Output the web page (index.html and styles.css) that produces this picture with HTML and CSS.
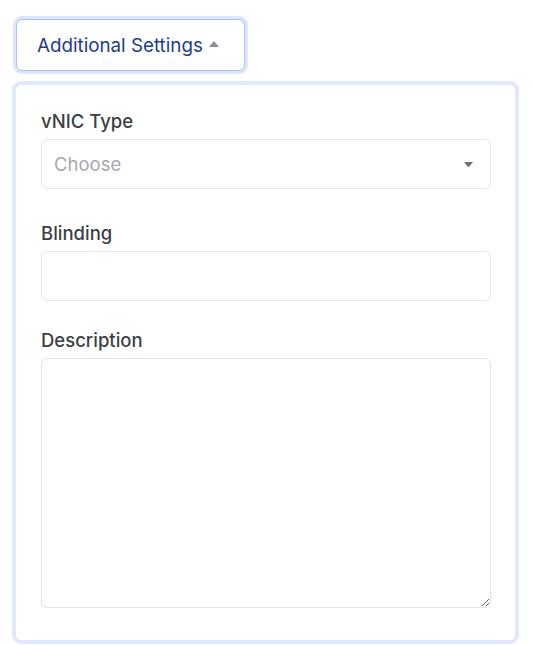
FILE: index.html
```html
<!DOCTYPE html>
<html>
<head>
<meta charset="utf-8">
<link rel="stylesheet" href="styles.css">
</head>
<body>
<div class="page">
  <button class="toggle" type="button">Additional Settings <span class="caret-up"></span></button>
  <div class="panel">
    <div class="group group-select">
      <label class="label">vNIC Type</label>
      <div class="select">
        <span class="placeholder">Choose</span>
        <svg class="caret-down" width="11" height="7" viewBox="0 0 11 7"><path d="M1 1 H10 L6.1 5.7 Q5.5 6.4 4.9 5.7 Z" fill="#6f737b"/></svg>
      </div>
    </div>
    <div class="group group-mid">
      <label class="label">Blinding</label>
      <input class="input" type="text">
    </div>
    <div class="group">
      <label class="label">Description</label>
      <textarea class="textarea"></textarea>
    </div>
  </div>
</div>
</body>
</html>
```
FILE: styles.css
```css
* { box-sizing: border-box; }
html, body { margin: 0; padding: 0; background: #fff; }
body { font-family: Inter, "Noto Sans", sans-serif; }
.page { display: flex; flex-direction: column; align-items: flex-start; padding-top: 19px; }
.toggle {
  margin-left: 16px;
  height: 52px;
  width: 229px;
  padding: 0 0 0 20px;
  display: flex;
  align-items: center;
  gap: 6px;
  font-family: Inter, sans-serif;
  font-size: 18.8px;
  color: #1e3c8c;
  background: #fff;
  border: 1px solid #a9c2f4;
  border-radius: 6px;
  box-shadow: 0 0 0 3px #dce6fc;
}
.caret-up {
  width: 0; height: 0;
  border-left: 5px solid transparent;
  border-right: 5px solid transparent;
  border-bottom: 6px solid #8a8e96;
  margin-top: -3px;
}
.panel {
  margin: 10px 0 0 12px;
  width: 507px;
  border: 4px solid #dfe8fc;
  border-radius: 9px;
  padding: 28px 24px 32px 25px;
}
.group { display: flex; flex-direction: column; }
.group-select { margin-bottom: 36px; }
.group-mid { margin-bottom: 31px; }
.label {
  font-size: 18.5px;
  line-height: 16px;
  font-weight: 500;
  color: #3b3f46;
  margin-bottom: 10px;
}
.select, .input, .textarea {
  width: 450px;
  border: 1px solid #e4e4e6;
  border-radius: 6px;
  background: #fff;
}
.select {
  height: 50px;
  display: flex;
  align-items: center;
  justify-content: space-between;
  padding: 0 16px 0 12px;
}
.placeholder { font-size: 18.5px; color: #a6a8ad; }
.caret-down { margin-top: 1px; }
.input { height: 50px; font-size: 18px; padding: 0 13px; outline: none; }
.textarea { height: 250px; resize: vertical; display: block; font-family: Inter, sans-serif; outline: none; }
```
